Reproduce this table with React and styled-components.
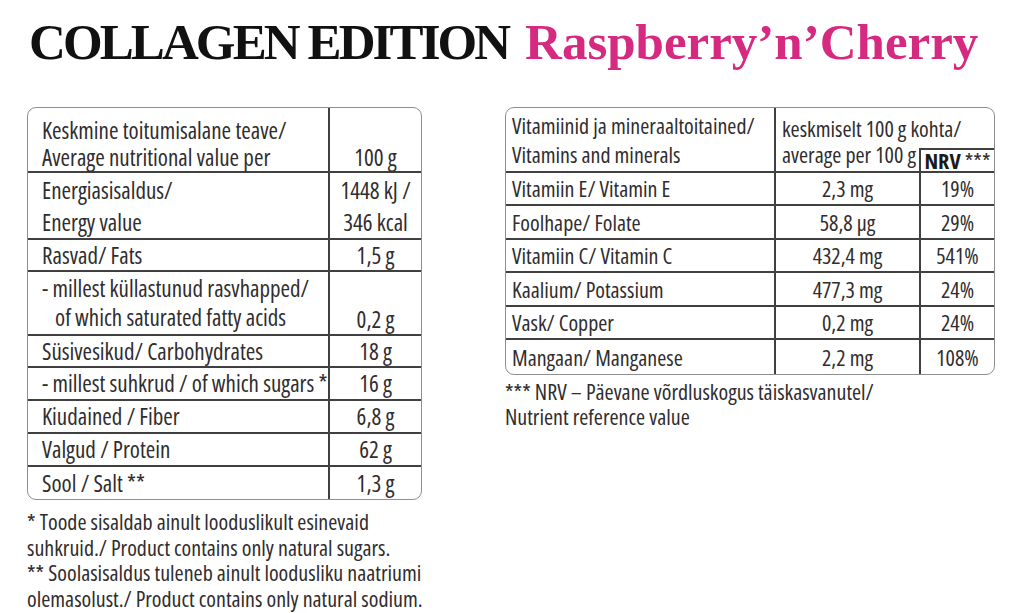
import React from "react";
import styled, { createGlobalStyle } from "styled-components";

const Global = createGlobalStyle`
  body {
    margin: 0;
    background: #fff;
    color: #302d2e;
    font-family: "Open Sans", "Liberation Sans", sans-serif;
    font-stretch: 75%;
    font-weight: 400;
  }
`;

const Page = styled.div`
  width: 1024px;
  height: 613px;
  overflow: hidden;
  padding: 16px 0 0 27px;
  box-sizing: border-box;
`;

const Title = styled.h1`
  margin: 0;
  padding-left: 2px;
  font-family: "Liberation Serif", "DejaVu Serif", serif;
  font-stretch: normal;
  font-weight: 700;
  font-size: 51px;
  line-height: 52px;
  white-space: nowrap;
`;

const Dark = styled.span`
  color: #111;
  letter-spacing: -2.9px;
`;

const Pink = styled.span`
  color: #d62a80;
  letter-spacing: 0px;
  margin-left: 4px;
`;

const Columns = styled.div`
  display: flex;
  align-items: flex-start;
  gap: 83px;
  margin-top: 39px;
`;

const Column = styled.div`
  width: ${(p) => p.$w}px;
  flex: none;
`;

const Card = styled.div`
  display: grid;
  grid-template-columns: ${(p) => p.$cols};
  grid-template-rows: ${(p) => p.$rows};
  border: 1.5px solid #8e8e8e;
  border-radius: 9px;
  overflow: hidden;
  font-size: ${(p) => p.$fs}px;
`;

const Cell = styled.div`
  display: flex;
  flex-direction: column;
  justify-content: ${(p) => (p.$v === "bottom" ? "flex-end" : "center")};
  align-items: ${(p) => (p.$center ? "center" : "flex-start")};
  text-align: ${(p) => (p.$center ? "center" : "left")};
  padding: ${(p) => p.$pad || "0 6px"};
  line-height: ${(p) => p.$lh || 29}px;
  white-space: nowrap;
  box-sizing: border-box;
  border-right: ${(p) => (p.$noRight ? "none" : "2px solid #404040")};
  border-bottom: ${(p) => (p.$noBottom ? "none" : "2px solid #404040")};
  border-top: ${(p) => (p.$top ? "2px solid #404040" : "none")};
  grid-column: ${(p) => p.$col || "auto"};
  grid-row: ${(p) => p.$row || "auto"};
`;

const Indent = styled.span`
  padding-left: 13px;
`;

const Bold = styled.b`
  font-weight: 700;
  color: #1a1a1a;
`;

const Note = styled.div`
  margin-top: ${(p) => p.$mt}px;
  font-size: 22px;
  line-height: ${(p) => p.$lh}px;
  white-space: nowrap;
`;

const nutrition = [
  { label: ["Energiasisaldus/", "Energy value"], value: ["1448 kJ /", "346 kcal"], lh: 32 },
  { label: ["Rasvad/ Fats"], value: ["1,5 g"] },
  { label: ["- millest küllastunud rasvhapped/", "of which saturated fatty acids"], value: ["0,2 g"], indent: true, bottom: true },
  { label: ["Süsivesikud/ Carbohydrates"], value: ["18 g"] },
  { label: ["- millest suhkrud / of which sugars *"], value: ["16 g"] },
  { label: ["Kiudained / Fiber"], value: ["6,8 g"] },
  { label: ["Valgud / Protein"], value: ["62 g"] },
  { label: ["Sool / Salt **"], value: ["1,3 g"] },
];

const vitamins = [
  ["Vitamiin E/ Vitamin E", "2,3 mg", "19%"],
  ["Foolhape/ Folate", "58,8 µg", "29%"],
  ["Vitamiin C/ Vitamin C", "432,4 mg", "541%"],
  ["Kaalium/ Potassium", "477,3 mg", "24%"],
  ["Vask/ Copper", "0,2 mg", "24%"],
  ["Mangaan/ Manganese", "2,2 mg", "108%"],
];

const NutritionTable = () => (
  <Card $fs={23} $cols="302px 1fr" $rows="65px 67px 32px 64px 32px 33px 33px 33px 32px">
    <Cell $v="bottom" $lh={27} $pad="0 6px 0 14px">
      <span>Keskmine toitumisalane teave/</span>
      <span>Average nutritional value per</span>
    </Cell>
    <Cell $v="bottom" $lh={27} $center $noRight>
      <span>100 g</span>
    </Cell>
    {nutrition.map((row, i) => {
      const last = i === nutrition.length - 1;
      return (
        <React.Fragment key={row.label[0]}>
          <Cell $lh={row.lh} $pad="0 2px 0 14px" $noBottom={last}>
            {row.label.map((t, j) =>
              row.indent && j === 1 ? <Indent key={t}>{t}</Indent> : <span key={t}>{t}</span>
            )}
          </Cell>
          <Cell $lh={row.lh} $center $noRight $noBottom={last} $v={row.bottom ? "bottom" : "center"}>
            {row.value.map((t) => (
              <span key={t}>{t}</span>
            ))}
          </Cell>
        </React.Fragment>
      );
    })}
  </Card>
);

const VitaminTable = () => (
  <Card $fs={22} $cols="270px 145px 1fr" $rows="40px 25px 33px 34px 33px 34px 33px 34px">
    <Cell $row="1 / 3" $col="1">
      <span>Vitamiinid ja mineraaltoitained/</span>
      <span>Vitamins and minerals</span>
    </Cell>
    <Cell $row="1" $col="2 / 4" $noRight $noBottom>
      <span>keskmiselt 100 g kohta/</span>
    </Cell>
    <Cell $row="2" $col="2" $v="bottom" $pad="0 2px 2px 6px">
      <span>average per 100 g</span>
    </Cell>
    <Cell $row="2" $col="3" $top $noRight $center $pad="0">
      <span>
        <Bold>NRV</Bold> ***
      </span>
    </Cell>
    {vitamins.map(([name, amount, nrv], i) => {
      const last = i === vitamins.length - 1;
      return (
        <React.Fragment key={name}>
          <Cell $noBottom={last}>{name}</Cell>
          <Cell $center $noBottom={last}>{amount}</Cell>
          <Cell $center $noRight $noBottom={last}>{nrv}</Cell>
        </React.Fragment>
      );
    })}
  </Card>
);

export default function App() {
  return (
    <>
      <Global />
      <Page>
        <Title>
          <Dark>COLLAGEN EDITION</Dark> <Pink>Raspberry’n’Cherry</Pink>
        </Title>
        <Columns>
          <Column $w={395}>
            <NutritionTable />
            <Note $mt={9} $lh={25.5}>
              * Toode sisaldab ainult looduslikult esinevaid
              <br />
              suhkruid./ Product contains only natural sugars.
              <br />
              ** Soolasisaldus tuleneb ainult loodusliku naatriumi
              <br />
              olemasolust./ Product contains only natural sodium.
            </Note>
          </Column>
          <Column $w={490}>
            <VitaminTable />
            <Note $mt={4} $lh={25}>
              *** NRV – Päevane võrdluskogus täiskasvanutel/
              <br />
              Nutrient reference value
            </Note>
          </Column>
        </Columns>
      </Page>
    </>
  );
}
